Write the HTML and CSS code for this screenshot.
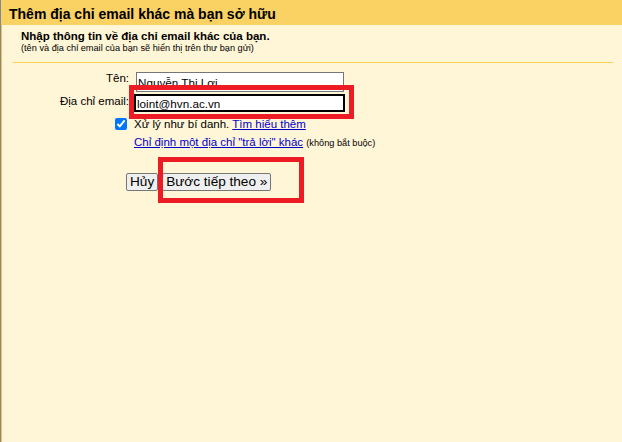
FILE: index.html
```html
<!DOCTYPE html>
<html lang="vi">
<head>
  <meta charset="UTF-8">
  <title>Thêm địa chỉ email khác mà bạn sở hữu</title>
  <link rel="stylesheet" href="styles.css">
</head>
<body>
<div class="page">
  <div class="header">Thêm địa chỉ email khác mà bạn sở hữu</div>

  <div class="intro">
    <div class="intro-title">Nhập thông tin về địa chỉ email khác của bạn.</div>
    <div class="intro-note">(tên và địa chỉ email của bạn sẽ hiển thị trên thư bạn gửi)</div>
  </div>

  <div class="divider"></div>

  <div class="row row-name">
    <label class="row-label" for="name">Tên:</label>
    <input class="field field-name" id="name" type="text" value="Nguyễn Thị Lợi">
  </div>

  <div class="row row-email">
    <label class="row-label" for="email">Địa chỉ email:</label>
    <input class="field field-email" id="email" type="text" value="loint@hvn.ac.vn">
  </div>

  <div class="row row-alias">
    <div class="row-label check-cell">
      <input class="check" id="alias" type="checkbox" checked>
    </div>
    <div class="row-text">
      <label for="alias">Xử lý như bí danh.</label>
      <a href="#" class="link">Tìm hiểu thêm</a>
    </div>
  </div>

  <div class="row row-reply">
    <div class="row-label"></div>
    <div class="row-text">
      <a href="#" class="link">Chỉ định một địa chỉ "trả lời" khác</a>
      <span class="optional">(không bắt buộc)</span>
    </div>
  </div>

  <div class="buttons">
    <button class="btn">Hủy</button>
    <button class="btn">Bước tiếp theo »</button>
  </div>

  <!-- annotation boxes drawn over the form -->
  <div class="mark mark-email"></div>
  <div class="mark mark-next"></div>
</div>
</body>
</html>
```

FILE: styles.css
```css
* {
  margin: 0;
  padding: 0;
  box-sizing: border-box;
}

html,
body {
  background: #fff5d7;
}

body {
  font-family: 'Liberation Sans', Arial, sans-serif;
  font-size: 11.5px;
  color: #000;
}

.page {
  position: relative;
  min-height: 100vh;
  border-left: 1px solid #7d8a99;
  box-shadow: inset 1px 0 0 #efc04f;
}

.header {
  height: 25px;
  background: #fad163;
  padding: 3px 0 0 8px;
  font-size: 14px;
  font-weight: bold;
  line-height: 22px;
}

.intro {
  padding-left: 20px;
}

.intro-title {
  margin-top: 5px;
  font-size: 11.5px;
  font-weight: bold;
  line-height: 13px;
}

.intro-note {
  font-size: 9.2px;
  line-height: 11px;
}

.divider {
  height: 1px;
  background: #fdd04f;
  margin: 8px 9px 0 12px;
}

.row {
  display: flex;
  align-items: flex-start;
}

.row-label {
  width: 128px;
  margin-right: 5px;
  text-align: right;
  line-height: 12px;
  flex-shrink: 0;
}

.row-name {
  margin-top: 9px;
}

.row-email {
  margin-top: 2px;
}

.row-email .row-label {
  line-height: 14px;
}

.row-alias {
  margin-top: 3px;
}

.row-text {
  line-height: 18px;
  white-space: nowrap;
}

.field {
  font-family: 'Liberation Sans', Arial, sans-serif;
  font-size: 11.7px;
  color: #000;
  background: #fff;
  padding: 0 1px;
  outline: none;
}

.field-name {
  margin-left: 2px;
  width: 208px;
  height: 20px;
  border: 1px solid #767676;
}

.field-email {
  width: 211px;
  height: 18px;
  border: 2px solid #000;
}

.check-cell {
  height: 18px;
  display: flex;
  justify-content: flex-end;
  align-items: center;
}

.check {
  width: 12px;
  height: 12px;
  margin: 0 2px 0 0;
}

.link {
  color: #0000cc;
  text-decoration: underline;
}

.optional {
  font-size: 9.2px;
}

.buttons {
  display: flex;
  gap: 4px;
  margin-top: 21px;
  padding-left: 125px;
}

.btn {
  font-family: 'Liberation Sans', Arial, sans-serif;
  font-size: 13.6px;
  line-height: 16px;
  padding: 0 3px;
  color: #000;
  background: #efefef;
  border: 1px solid #767676;
  border-radius: 2px;
}

.mark {
  position: absolute;
  border: 5px solid #ed1c24;
}

.mark-email {
  left: 128px;
  top: 85px;
  width: 225px;
  height: 34px;
}

.mark-next {
  left: 157px;
  top: 157px;
  width: 146px;
  height: 46px;
}
```
